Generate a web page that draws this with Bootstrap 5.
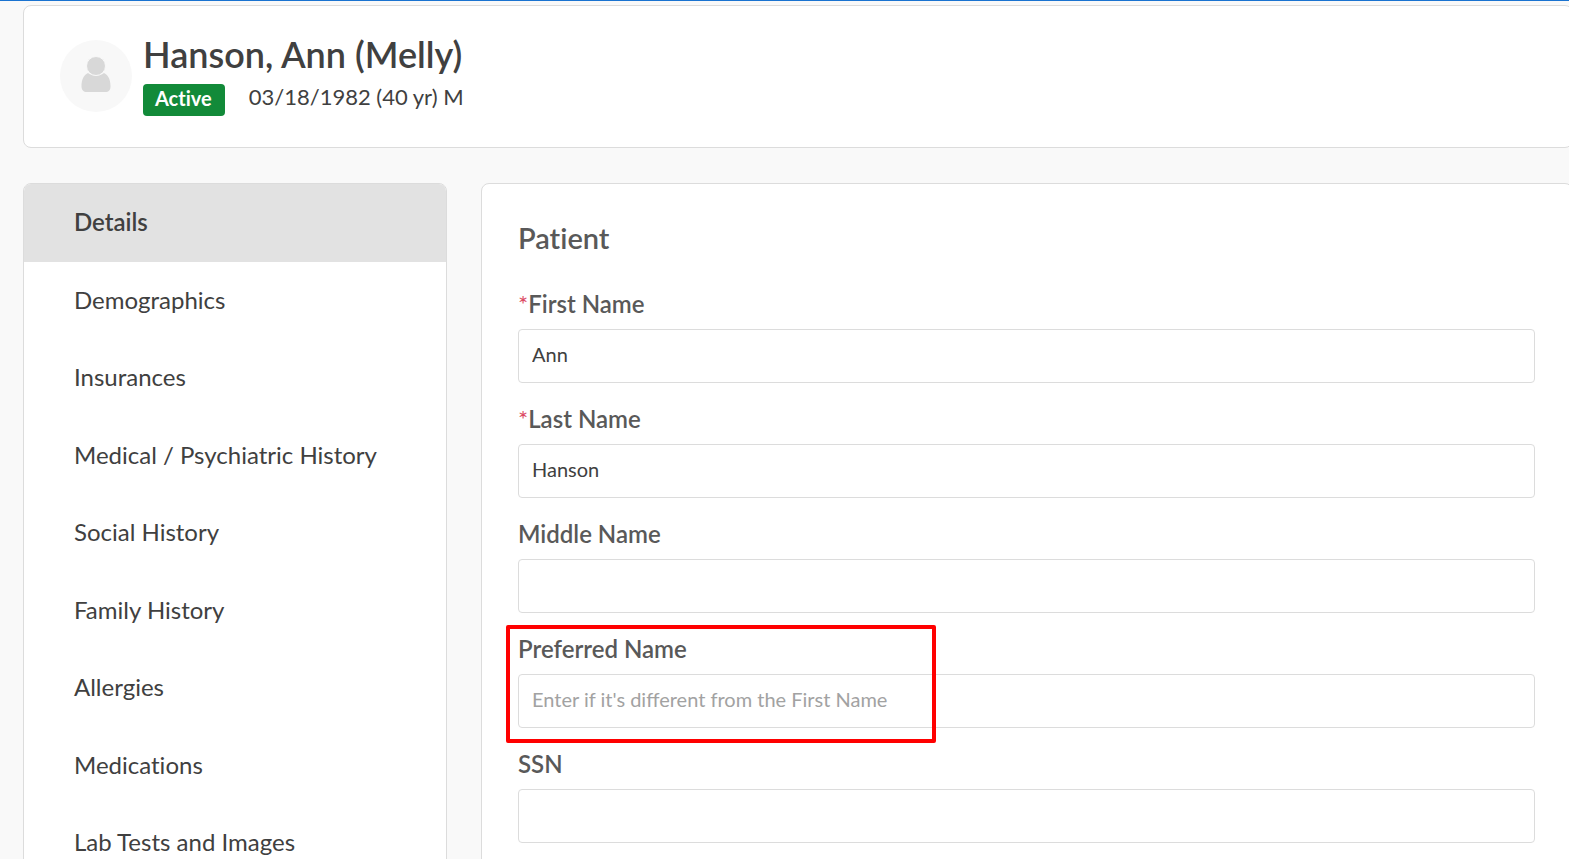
<!DOCTYPE html>
<html lang="en">
<head>
<meta charset="utf-8">
<meta name="viewport" content="width=device-width, initial-scale=1">
<title>Patient details</title>
<link href="https://cdn.jsdelivr.net/npm/bootstrap@5.3.0/dist/css/bootstrap.min.css" rel="stylesheet">
<style>
body{background:#f9f9f9;color:#404040;font-family:Lato,"Open Sans",sans-serif;font-size:24px;line-height:32px;font-variant-ligatures:none;overflow-x:hidden}
.topline{height:1px;background:#1a73d0}
.page-body{padding:4px 0 0 23px;margin-right:-4px}
.panel{background:#fff;border:1px solid #dcdcdc;border-radius:8px}
.patient-head{height:143px;padding:34px 36px;margin-bottom:35px}
.avatar{width:72px;height:72px}
.patient-text{margin-left:11px}
.patient-name{font-size:36px;line-height:32px;font-weight:600;margin:-2px 0 14px}
.status-tag{background:#128a39;color:#fff;font-size:20px;line-height:28px;font-weight:700;padding:0 13px 4px 12px;border-radius:4px}
.birth{font-size:22px;line-height:26px}
.record-cols{gap:34px}
.side-col{flex:0 0 424px}
.side-col .nav-link{color:#404040;padding:22px 50px 23px}
.side-col li:nth-child(odd) .nav-link{padding-bottom:24px}
.side-col .nav-link.active{background:#e2e2e2;font-weight:600;border-radius:7px 7px 0 0}
.form-panel{padding:36px 37px 0 36px;color:#595959}
.form-panel h2{font-size:29px;line-height:36px;font-weight:600;margin:0 0 32px}
.form-panel .form-label{font-weight:600;margin:0 0 9px;line-height:32px;display:block}
.req{color:#dc4a63;font-weight:400;line-height:1}
.field{margin-bottom:20px}
.form-panel .form-control{height:54px;border:1px solid #dcdcdc;border-radius:4px;padding:0 13px 5px;font-size:20px;color:#404040}
.form-panel .form-control::placeholder{color:#a2a2a2}
.marked{position:relative}
.marked::after{content:"";position:absolute;left:-12px;top:-8px;width:430px;height:118px;border:4px solid red;border-radius:2px;pointer-events:none}
</style>
</head>
<body>
<div class="topline"></div>
<div class="page-body">
  <header class="panel patient-head d-flex">
    <svg class="avatar flex-shrink-0" viewBox="0 0 72 72" aria-hidden="true"><circle cx="36" cy="36" r="36" fill="#f8f8f8"/><path fill="#d8d8d8" d="M28 33c-4.500 2-6.500 7-6.500 13 0 4 2 6 5.500 6h18c4 0 5.500-2 5.500-6 0-6-2-11-6.500-13-5 3.500-11 3.500-16 0z"/><circle cx="36" cy="26" r="9.500" fill="#d8d8d8" stroke="#f8f8f8"/></svg>
    <div class="patient-text">
      <h1 class="patient-name">Hanson, Ann (Melly)</h1>
      <div class="d-flex align-items-start gap-4"><span class="status-tag">Active</span><span class="birth">03/18/1982 (40 yr) M</span></div>
    </div>
  </header>
  <div class="d-flex record-cols">
    <nav class="panel side-col" aria-label="Patient record">
      <ul class="nav flex-column">
        <li><a class="nav-link active" href="#">Details</a></li>
        <li><a class="nav-link" href="#">Demographics</a></li>
        <li><a class="nav-link" href="#">Insurances</a></li>
        <li><a class="nav-link" href="#">Medical / Psychiatric History</a></li>
        <li><a class="nav-link" href="#">Social History</a></li>
        <li><a class="nav-link" href="#">Family History</a></li>
        <li><a class="nav-link" href="#">Allergies</a></li>
        <li><a class="nav-link" href="#">Medications</a></li>
        <li><a class="nav-link" href="#">Lab Tests and Images</a></li>
      </ul>
    </nav>
    <main class="panel form-panel flex-grow-1">
      <h2>Patient</h2>
      <form>
        <div class="field"><label class="form-label" for="first"><span class="req">*</span>First Name</label><input class="form-control" id="first" type="text" value="Ann"></div>
        <div class="field"><label class="form-label" for="last"><span class="req">*</span>Last Name</label><input class="form-control" id="last" type="text" value="Hanson"></div>
        <div class="field"><label class="form-label" for="middle">Middle Name</label><input class="form-control" id="middle" type="text"></div>
        <div class="field marked"><label class="form-label" for="preferred">Preferred Name</label><input class="form-control" id="preferred" type="text" placeholder="Enter if it's different from the First Name"></div>
        <div class="field"><label class="form-label" for="ssn">SSN</label><input class="form-control" id="ssn" type="text"></div>
      </form>
    </main>
  </div>
</div>
<script src="https://cdn.jsdelivr.net/npm/bootstrap@5.3.0/dist/js/bootstrap.bundle.min.js"></script>
</body>
</html>
